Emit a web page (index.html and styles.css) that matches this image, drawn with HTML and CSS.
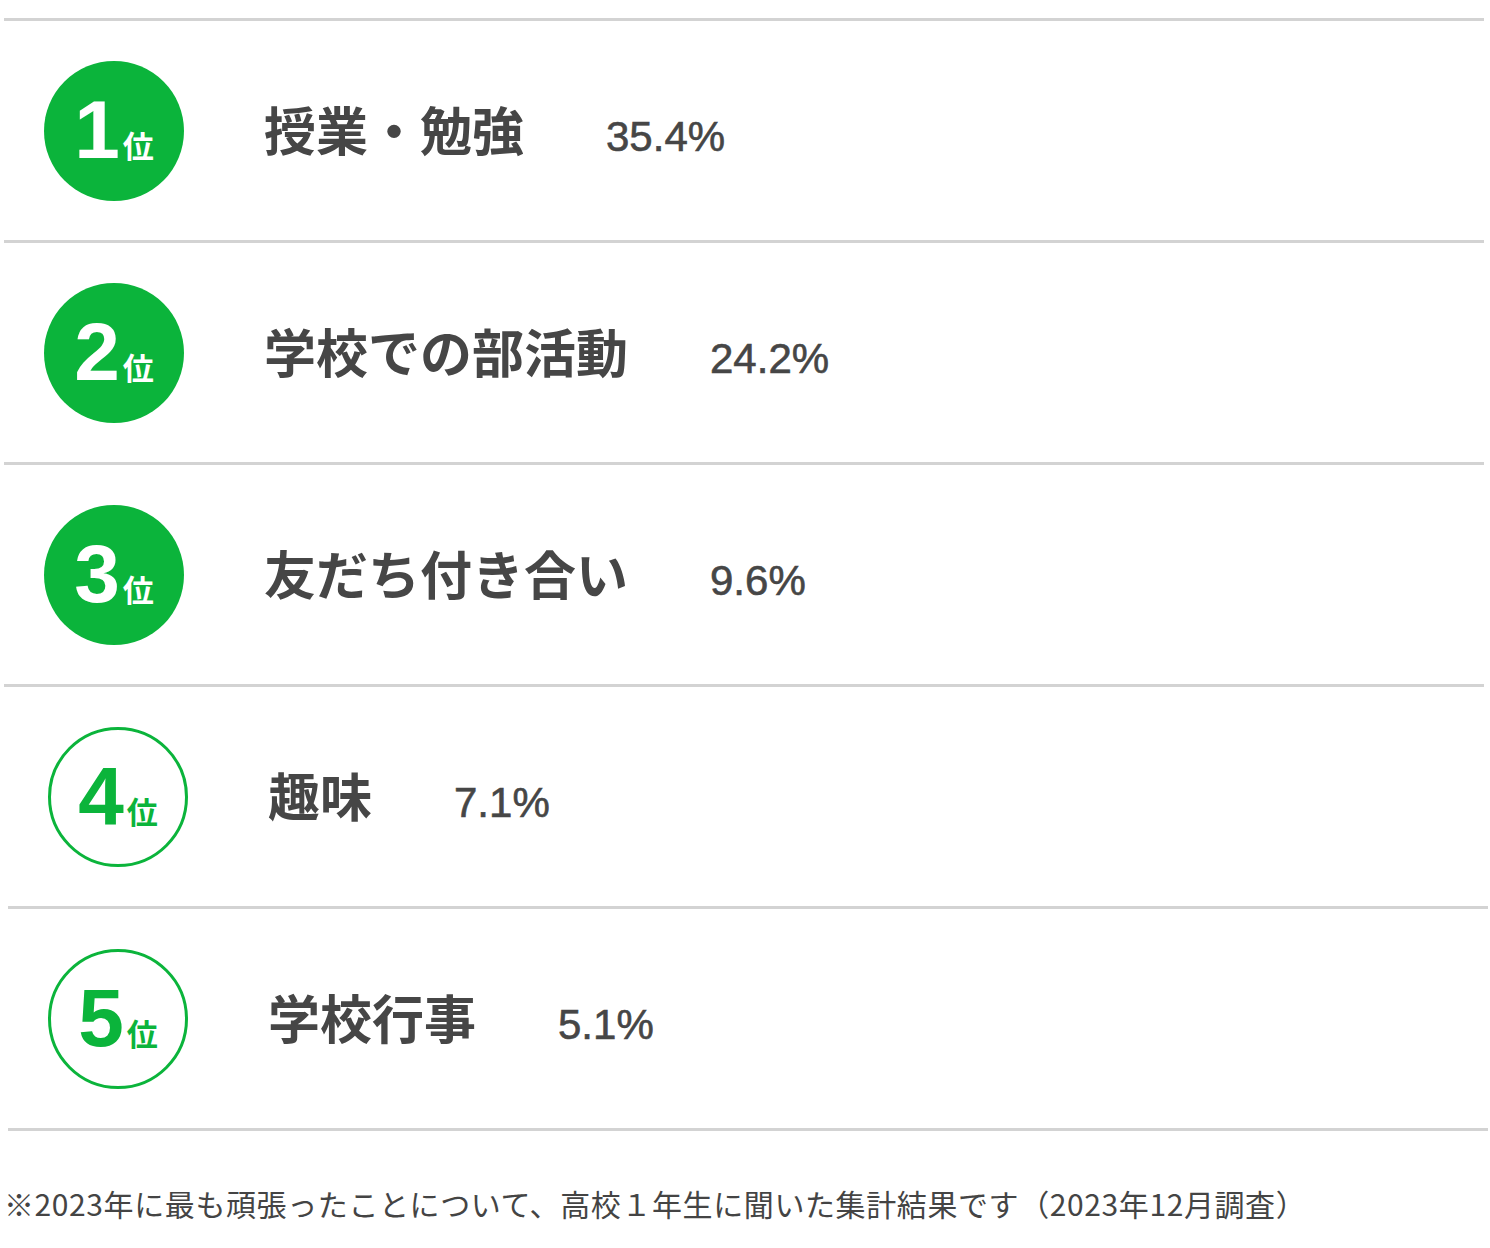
FILE: index.html
```html
<!DOCTYPE html>
<html lang="ja">
<head>
<meta charset="utf-8">
<title>ランキング</title>
<link rel="stylesheet" href="styles.css">
</head>
<body>
<ul class="ranking">
  <li class="item">
    <div class="badge badge-fill"><span class="badge-inner"><span class="num">1</span><span class="rank">位</span></span></div>
    <div class="label"><span class="title">授業・勉強</span><span class="pct">35.4%</span></div>
  </li>
  <li class="item">
    <div class="badge badge-fill"><span class="badge-inner"><span class="num">2</span><span class="rank">位</span></span></div>
    <div class="label"><span class="title">学校での部活動</span><span class="pct">24.2%</span></div>
  </li>
  <li class="item">
    <div class="badge badge-fill"><span class="badge-inner"><span class="num">3</span><span class="rank">位</span></span></div>
    <div class="label"><span class="title">友だち付き合い</span><span class="pct">9.6%</span></div>
  </li>
  <li class="item item-shift">
    <div class="badge badge-line"><span class="badge-inner"><span class="num">4</span><span class="rank">位</span></span></div>
    <div class="label"><span class="title">趣味</span><span class="pct">7.1%</span></div>
  </li>
  <li class="item item-shift">
    <div class="badge badge-line"><span class="badge-inner"><span class="num">5</span><span class="rank">位</span></span></div>
    <div class="label"><span class="title">学校行事</span><span class="pct">5.1%</span></div>
  </li>
</ul>
<p class="note">※2023年に最も頑張ったことについて、高校１年生に聞いた集計結果です（2023年12月調査）</p>
</body>
</html>
```

FILE: styles.css
```css
html, body {
  margin: 0;
  padding: 0;
  background: #ffffff;
}

body {
  font-family: "Noto Sans CJK JP", "Noto Sans", sans-serif;
  color: #444444;
}

.ranking {
  list-style: none;
  margin: 18px 0 0 4px;
  padding: 0;
  width: 1480px;
  border-top: 3px solid #d3d3d3;
}

.item {
  display: flex;
  align-items: center;
  height: 219px;
  padding-left: 40px;
  border-bottom: 3px solid #d3d3d3;
}

.item-shift {
  margin-left: 4px;
  margin-right: -4px;
}

.badge {
  width: 140px;
  height: 140px;
  box-sizing: border-box;
  border-radius: 50%;
  flex: none;
  display: flex;
  align-items: center;
  justify-content: center;
}

.badge-inner {
  display: block;
  line-height: 1;
  white-space: nowrap;
  margin-top: -2px;
}

.badge-fill {
  background: #0bb43b;
  color: #ffffff;
}

.badge-line {
  background: #ffffff;
  border: 3px solid #0bb43b;
  color: #0bb43b;
}

.num {
  font-family: "Liberation Sans", Arial, sans-serif;
  font-weight: 700;
  font-size: 82px;
  line-height: 1;
  vertical-align: baseline;
}

.rank {
  font-family: "Noto Sans CJK JP", sans-serif;
  font-weight: 700;
  font-size: 31px;
  line-height: 1;
  margin-left: 3px;
  vertical-align: baseline;
}

.label {
  margin-left: 80px;
  line-height: 1;
  white-space: nowrap;
}

.title {
  font-family: "Noto Sans CJK JP", sans-serif;
  font-weight: 700;
  font-size: 52px;
  color: #464646;
}

.pct {
  font-family: "Liberation Sans", Arial, sans-serif;
  font-size: 42px;
  color: #464646;
  margin-left: 82px;
  -webkit-text-stroke: 0.6px #464646;
}

.note {
  margin: 50px 0 0 4px;
  font-size: 30px;
  line-height: 45px;
  letter-spacing: 0.6px;
  color: #444444;
  white-space: nowrap;
}
```
